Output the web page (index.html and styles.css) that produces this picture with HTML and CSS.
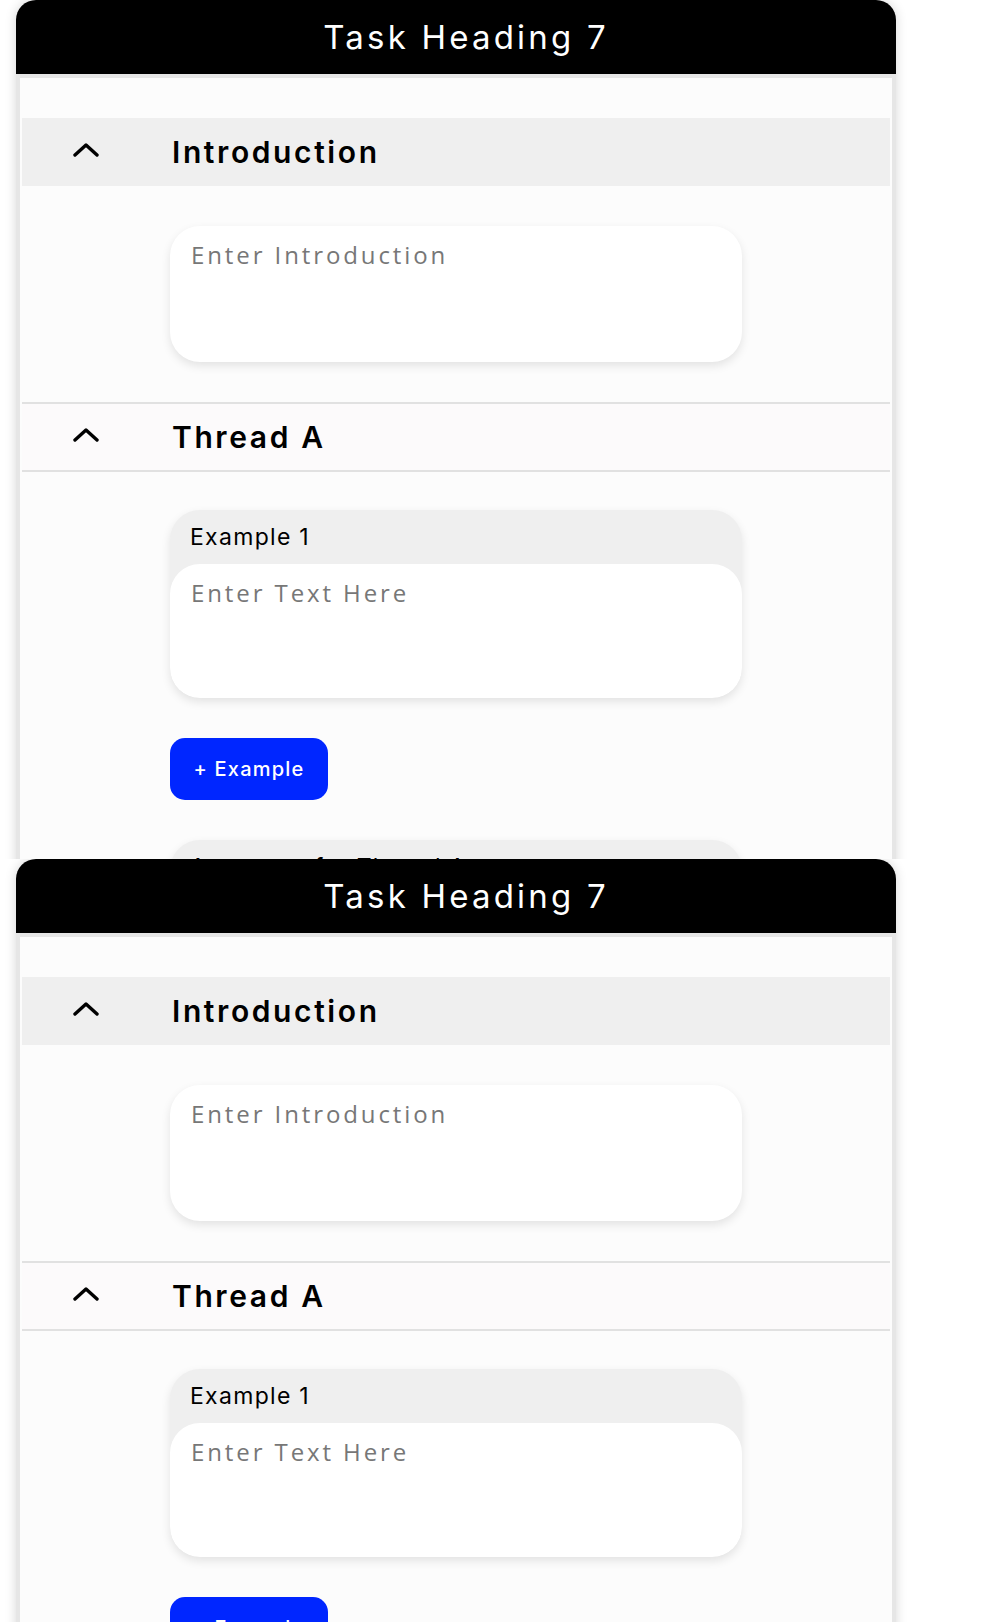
FILE: index.html
```html
<!DOCTYPE html>
<html lang="en">
<head>
<meta charset="utf-8">
<title>Task Heading 7</title>
<link rel="stylesheet" href="styles.css">
</head>
<body>
<div class="frame">
  <section class="panel">
    <header class="panel-head"><h1 class="panel-title">Task Heading 7</h1></header>
    <div class="panel-body">
      <div class="sec-head sec-head--gray">
        <svg class="chev" viewBox="0 0 26 14" width="26" height="14" aria-hidden="true"><polyline points="2,12 13,2 24,12" fill="none" stroke="#000" stroke-width="3.4" stroke-linecap="round" stroke-linejoin="round"/></svg>
        <h2 class="sec-title">Introduction</h2>
      </div>
      <div class="sec-content sec-content--intro">
        <textarea class="field field--intro" placeholder="Enter Introduction"></textarea>
      </div>
      <div class="sec-head sec-head--line">
        <svg class="chev" viewBox="0 0 26 14" width="26" height="14" aria-hidden="true"><polyline points="2,12 13,2 24,12" fill="none" stroke="#000" stroke-width="3.4" stroke-linecap="round" stroke-linejoin="round"/></svg>
        <h2 class="sec-title">Thread A</h2>
      </div>
      <div class="sec-content sec-content--thread">
        <div class="card">
          <div class="card-label">Example 1</div>
          <textarea class="field field--card" placeholder="Enter Text Here"></textarea>
        </div>
        <button class="add-btn" type="button">+ Example</button>
        <div class="card">
          <div class="card-label">Argument for Thread A</div>
          <textarea class="field field--card" placeholder="Enter Text Here"></textarea>
        </div>
      </div>
    </div>
  </section>
</div>
<div class="frame">
  <section class="panel">
    <header class="panel-head"><h1 class="panel-title">Task Heading 7</h1></header>
    <div class="panel-body">
      <div class="sec-head sec-head--gray">
        <svg class="chev" viewBox="0 0 26 14" width="26" height="14" aria-hidden="true"><polyline points="2,12 13,2 24,12" fill="none" stroke="#000" stroke-width="3.4" stroke-linecap="round" stroke-linejoin="round"/></svg>
        <h2 class="sec-title">Introduction</h2>
      </div>
      <div class="sec-content sec-content--intro">
        <textarea class="field field--intro" placeholder="Enter Introduction"></textarea>
      </div>
      <div class="sec-head sec-head--line">
        <svg class="chev" viewBox="0 0 26 14" width="26" height="14" aria-hidden="true"><polyline points="2,12 13,2 24,12" fill="none" stroke="#000" stroke-width="3.4" stroke-linecap="round" stroke-linejoin="round"/></svg>
        <h2 class="sec-title">Thread A</h2>
      </div>
      <div class="sec-content sec-content--thread">
        <div class="card">
          <div class="card-label">Example 1</div>
          <textarea class="field field--card" placeholder="Enter Text Here"></textarea>
        </div>
        <button class="add-btn" type="button">+ Example</button>
        <div class="card">
          <div class="card-label">Argument for Thread A</div>
          <textarea class="field field--card" placeholder="Enter Text Here"></textarea>
        </div>
      </div>
    </div>
  </section>
</div>
</body>
</html>
```

FILE: styles.css
```css
html, body {
  margin: 0;
  padding: 0;
  background: #ffffff;
}

body {
  font-family: "Inter", "Liberation Sans", sans-serif;
  color: #000;
}

.frame {
  height: 859px;
  overflow: hidden;
  padding: 0 0 0 16px;
  box-sizing: border-box;
}

.panel {
  width: 880px;
  min-height: 1000px;
  box-shadow: 0 0 12px rgba(0, 0, 0, 0.16);
  border-radius: 20px 20px 0 0;
  background: #fcfcfc;
}

.panel-head {
  height: 74px;
  background: #000;
  border-radius: 20px 20px 0 0;
  display: flex;
  align-items: center;
  justify-content: center;
}

.panel-title {
  margin: 0;
  color: #fff;
  font-family: "Inter", "Liberation Sans", sans-serif;
  font-weight: 400;
  font-size: 33px;
  letter-spacing: 3.2px;
  line-height: 1;
  padding: 1px 0 0 20px;
}

.panel-body {
  border: 4px solid #e6e6e6;
  border-bottom: none;
  padding: 40px 2px 0;
  background: #fcfcfc;
  min-height: 1000px;
}

.sec-head {
  height: 68px;
  display: flex;
  align-items: center;
  padding-left: 51px;
  box-sizing: border-box;
}

.sec-head--gray {
  background: #efefef;
}

.sec-head--line {
  background: #fcfafb;
  border-top: 2px solid #e1e1e1;
  border-bottom: 2px solid #e1e1e1;
  height: 70px;
}

.chev {
  display: block;
  flex: none;
  margin-top: -4px;
}

.sec-title {
  margin: 0 0 0 73px;
  font-size: 30px;
  font-weight: 600;
  letter-spacing: 2.6px;
  line-height: 1;
}

.sec-content {
  padding-left: 148px;
  display: flex;
  flex-direction: column;
  align-items: flex-start;
}

.sec-content--intro {
  padding-top: 40px;
  padding-bottom: 40px;
}

.sec-content--thread {
  padding-top: 38px;
  gap: 40px;
}

.field {
  display: block;
  width: 572px;
  box-sizing: border-box;
  border: none;
  outline: none;
  resize: none;
  background: #fff;
  font-family: "Open Sans", "Liberation Sans", sans-serif;
  font-size: 24px;
  letter-spacing: 2.9px;
  line-height: 30px;
  color: #333;
  padding: 14px 21px;
  margin: 0;
}

.field::placeholder {
  color: #777;
  opacity: 1;
}

.field--intro {
  height: 136px;
  border-radius: 30px;
  box-shadow: 0 4px 10px rgba(0, 0, 0, 0.1);
}

.field--card {
  height: 134px;
  border-radius: 30px;
}

.card {
  width: 572px;
  background: #efefef;
  border-radius: 30px;
  box-shadow: 0 4px 10px rgba(0, 0, 0, 0.1);
  overflow: hidden;
}

.card-label {
  height: 54px;
  box-sizing: border-box;
  padding: 12px 0 0 20px;
  font-size: 23px;
  line-height: 30px;
  letter-spacing: 1.3px;
  color: #000;
}

.add-btn {
  width: 158px;
  height: 62px;
  border: none;
  border-radius: 15px;
  background: #0026ff;
  color: #fff;
  font-family: "Inter", "Liberation Sans", sans-serif;
  font-size: 20px;
  font-weight: 500;
  letter-spacing: 1.2px;
  padding: 0;
  cursor: pointer;
}
```
